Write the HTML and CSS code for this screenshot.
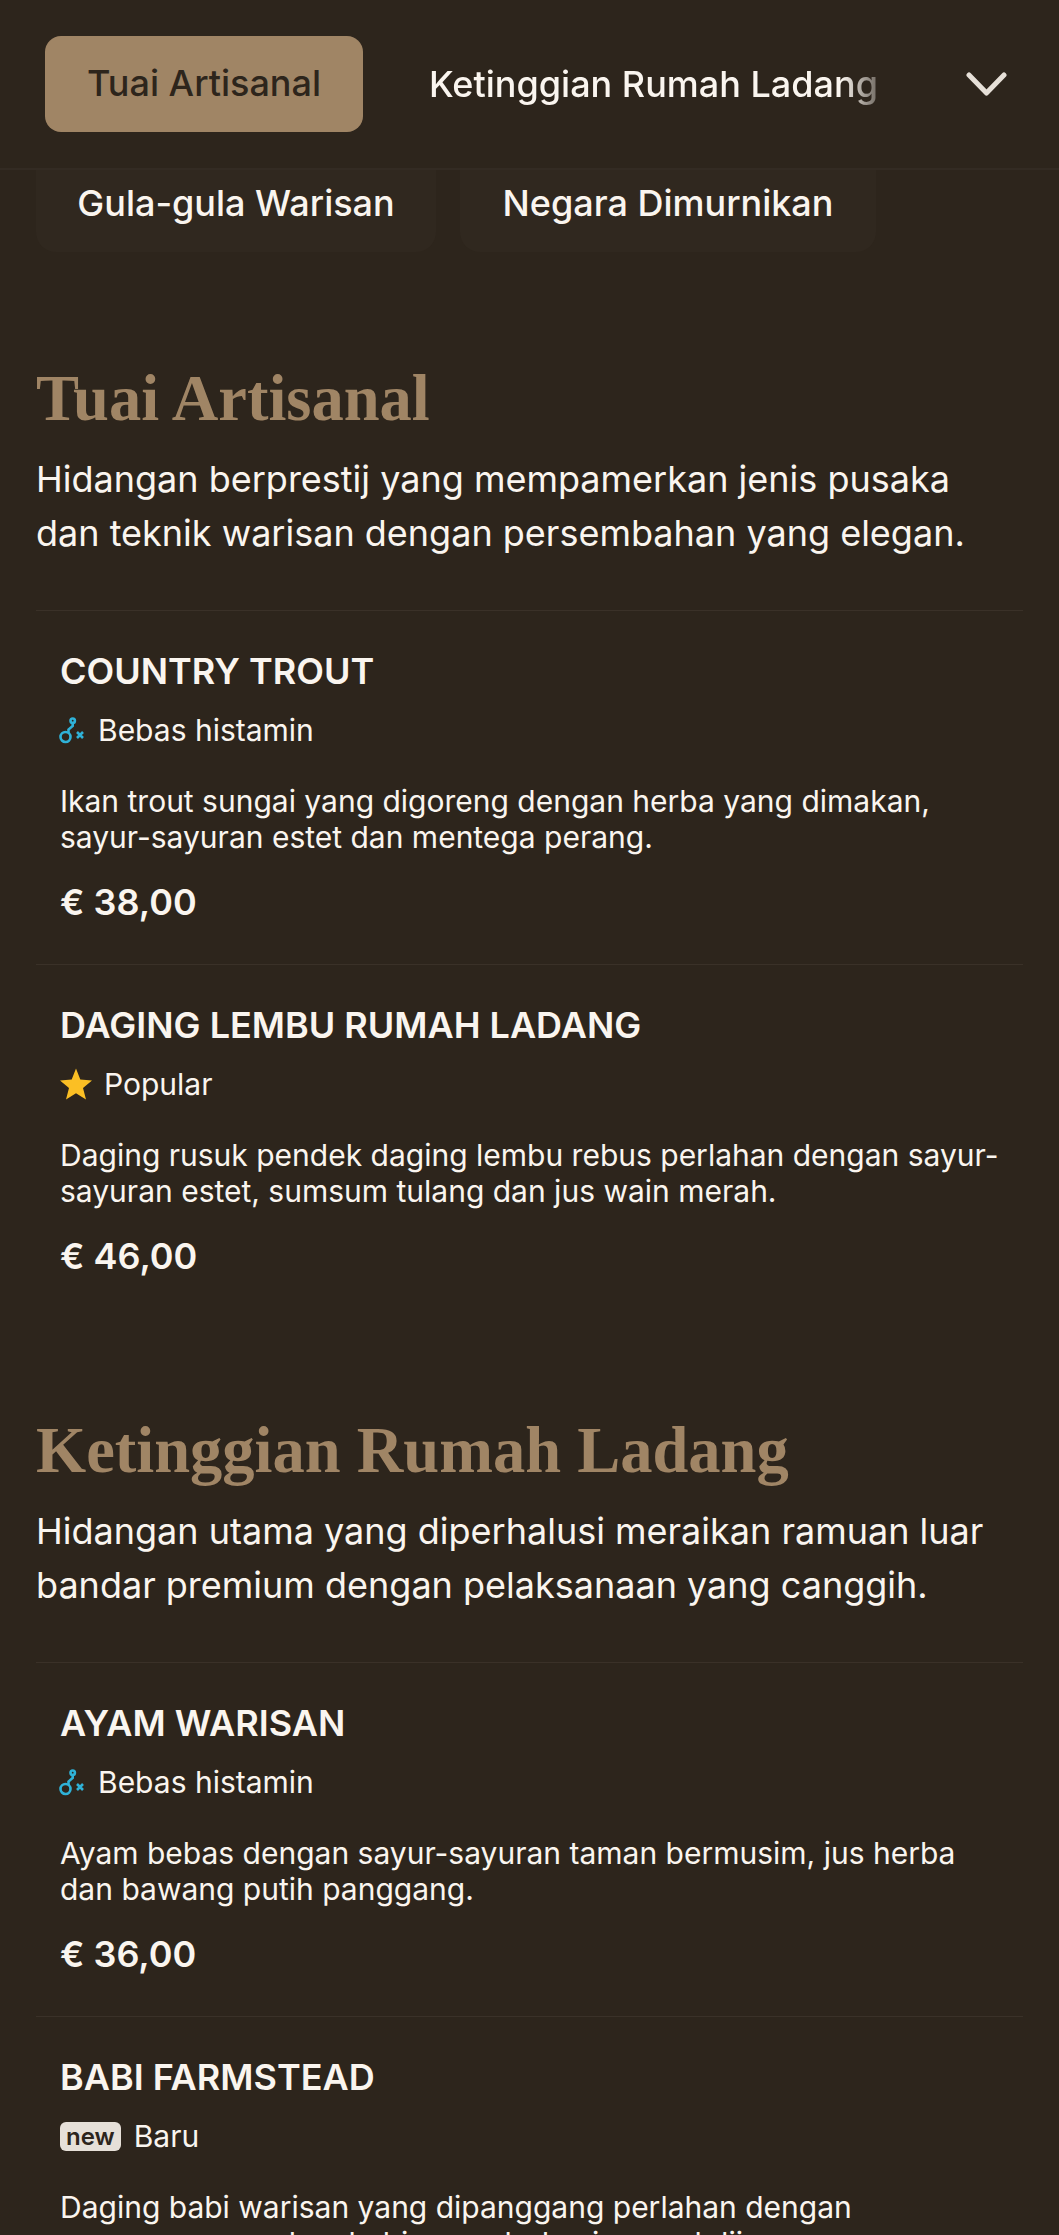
FILE: index.html
```html
<!DOCTYPE html>
<html lang="ms">
<head>
    <meta charset="UTF-8">
    <meta name="viewport" content="width=device-width, initial-scale=1.0">
    <title>Menu</title>
    <link rel="stylesheet" href="styles.css">
</head>
<body>
    <header class="tabs">
        <button class="tab active">Tuai Artisanal</button>
        <div class="tab-scroll">
            <button class="tab">Ketinggian Rumah Ladang</button>
        </div>
        <button class="more" aria-label="Lagi">
            <svg viewBox="0 0 41 24" width="41" height="24"><path d="M3 3 L20.5 21 L38 3" fill="none" stroke="#e6e0d8" stroke-width="5" stroke-linecap="round" stroke-linejoin="round"/></svg>
        </button>
    </header>

    <div class="chips">
        <button class="chip">Gula-gula Warisan</button>
        <button class="chip">Negara Dimurnikan</button>
    </div>

    <main>
        <section class="category">
            <h2>Tuai Artisanal</h2>
            <p class="lead">Hidangan berprestij yang mempamerkan jenis pusaka dan teknik warisan dengan persembahan yang elegan.</p>

            <article class="dish">
                <h3>COUNTRY TROUT</h3>
                <div class="tag">
                    <svg class="ico-hist" viewBox="0 0 26 28" width="26" height="28"><use href="#hist"/></svg>
                    <span>Bebas histamin</span>
                </div>
                <p class="desc">Ikan trout sungai yang digoreng dengan herba yang dimakan, sayur-sayuran estet dan mentega perang.</p>
                <div class="price">€ 38,00</div>
            </article>

            <article class="dish">
                <h3>DAGING LEMBU RUMAH LADANG</h3>
                <div class="tag">
                    <svg viewBox="0 0 32 32" width="32" height="32"><path d="M16 .5l4.3 11.1 11.7.9-9 7.5 3 11.5-10-6.300-10 6.300 3-11.500-9-7.500 11.700-.9z" fill="#fbbf24"/></svg>
                    <span>Popular</span>
                </div>
                <p class="desc">Daging rusuk pendek daging lembu rebus perlahan dengan sayur-sayuran estet, sumsum tulang dan jus wain merah.</p>
                <div class="price">€ 46,00</div>
            </article>
        </section>

        <section class="category">
            <h2>Ketinggian Rumah Ladang</h2>
            <p class="lead">Hidangan utama yang diperhalusi meraikan ramuan luar bandar premium dengan pelaksanaan yang canggih.</p>

            <article class="dish">
                <h3>AYAM WARISAN</h3>
                <div class="tag">
                    <svg class="ico-hist" viewBox="0 0 26 28" width="26" height="28"><use href="#hist"/></svg>
                    <span>Bebas histamin</span>
                </div>
                <p class="desc">Ayam bebas dengan sayur-sayuran taman bermusim, jus herba dan bawang putih panggang.</p>
                <div class="price">€ 36,00</div>
            </article>

            <article class="dish">
                <h3>BABI FARMSTEAD</h3>
                <div class="tag">
                    <span class="new">new</span>
                    <span>Baru</span>
                </div>
                <p class="desc">Daging babi warisan yang dipanggang perlahan dengan<br>sayur-sayuran akar, kubis merah dan jus epal dijerang.</p>
            </article>
        </section>
    </main>

    <svg width="0" height="0" class="defs">
        <symbol id="hist" viewBox="0 0 26 28">
            <g fill="none" stroke="#2fb2d8" stroke-width="2.600">
                <circle cx="7.500" cy="21" r="5"/>
                <path d="M10.500 17 V13.500 L14.700 10 V7"/>
                <circle cx="14.700" cy="4.700" r="2.200"/>
                <path d="M19 16 L25 22 M25 16 L19 22"/>
            </g>
        </symbol>
    </svg>
</body>
</html>
```

FILE: styles.css
```css
/* Page */
html, body {
    margin: 0;
    height: 100vh;
    overflow: hidden;
}

body {
    background-color: #2d251c;
    color: #faf5ef;
    font-family: Inter, "Liberation Sans", sans-serif;
}

button {
    font-family: inherit;
    color: inherit;
    border: none;
    background: none;
    padding: 0;
}

.defs {
    display: block;
}

/* Top tab bar */
.tabs {
    display: flex;
    align-items: center;
    height: 170px;
    padding: 0 45px;
    box-sizing: border-box;
    border-bottom: 2px solid #332b23;
}

.tab {
    font-size: 36px;
    font-weight: 500;
    white-space: nowrap;
    line-height: 94px;
}

.tab.active {
    flex: none;
    width: 318px;
    height: 96px;
    padding-bottom: 2px;
    border-radius: 16px;
    background-color: #a08565;
    color: #2d251c;
}

.tab-scroll {
    width: 448px;
    margin-left: 66px;
    overflow: hidden;
    -webkit-mask-image: linear-gradient(to right, #000 92%, rgba(0, 0, 0, .35));
    mask-image: linear-gradient(to right, #000 92%, rgba(0, 0, 0, .35));
}

.more {
    margin-left: auto;
    margin-right: 7px;
    height: 24px;
}

/* Second row of categories, runs under the bar */
.chips {
    display: flex;
    gap: 24px;
    padding: 0 36px;
}

.chip {
    width: 400px;
    height: 82px;
    padding-bottom: 16px;
    font-size: 36px;
    font-weight: 500;
    background-color: #30281f;
    border-radius: 0 0 20px 20px;
}

.chip + .chip {
    width: 416px;
}

/* Sections */
main {
    padding: 0 36px;
}

.category {
    padding-top: 109px;
}

.category + .category {
    padding-top: 95px;
}

h2 {
    margin: 0;
    font-family: "Liberation Serif", serif;
    font-size: 64.5px;
    line-height: 76px;
    font-weight: 700;
    color: #a08565;
}

.lead {
    margin: 15px 0 50px;
    font-size: 36px;
    line-height: 54px;
}

.dish {
    padding: 36px 24px 38px;
    border-top: 1px solid #3a3128;
}

h3 {
    margin: 0;
    font-size: 36px;
    line-height: 48px;
    font-weight: 600;
}

.tag {
    display: flex;
    align-items: center;
    gap: 12px;
    margin-top: 12px;
    font-size: 30px;
    line-height: 46px;
}

.ico-hist {
    margin-left: -2px;
    margin-right: 2px;
}

.new {
    padding: 0 6px;
    margin-right: 1px;
    border-radius: 6px;
    background-color: #e6e0d8;
    color: #2d251c;
    font-size: 24px;
    line-height: 29px;
    font-weight: 600;
}

.desc {
    margin: 30px 0 0;
    font-size: 30px;
    line-height: 36px;
}

.price {
    margin-top: 23px;
    font-size: 36px;
    line-height: 48px;
    font-weight: 600;
}
```
